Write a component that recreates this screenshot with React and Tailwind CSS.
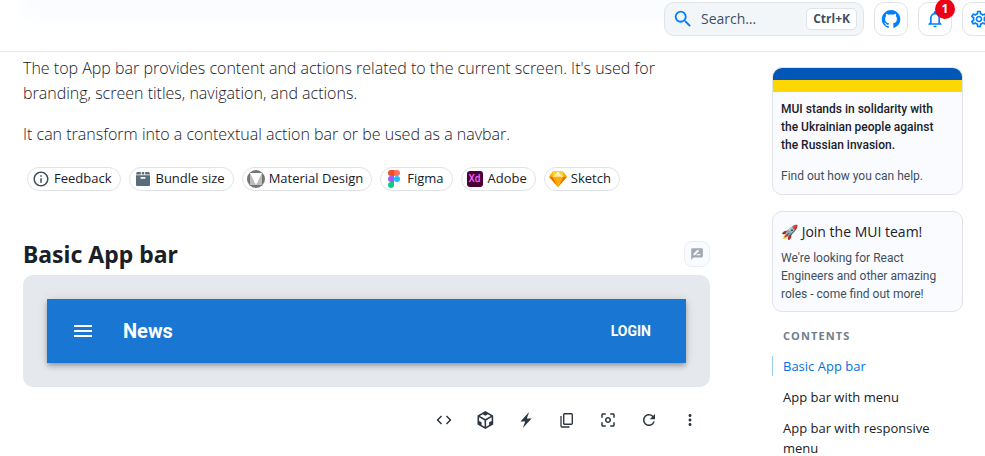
import {
  MdSearch, MdOutlineSettings, MdInfoOutline, MdCode, MdRefresh, MdMoreVert, MdMenu,
  MdRateReview, MdCenterFocusWeak, MdNotificationsNone,
} from "react-icons/md";

function GitHubIcon() {
  return (
    <svg viewBox="0 0 24 24" className="size-5" fill="currentColor" aria-hidden="true">
      <path d="M12 1.27a11 11 0 00-3.48 21.46c.55.09.73-.28.73-.55v-1.84c-3.03.64-3.67-1.46-3.67-1.46-.55-1.29-1.28-1.65-1.28-1.65-.92-.65.1-.65.1-.65 1.1 0 1.73 1.1 1.73 1.1.92 1.65 2.57 1.2 3.21.92a2 2 0 01.64-1.47c-2.47-.27-5.04-1.19-5.04-5.5 0-1.1.46-2.1 1.2-2.84a3.76 3.76 0 010-2.93s.91-.28 3.11 1.1c1.8-.49 3.7-.49 5.5 0 2.1-1.38 3.02-1.1 3.02-1.1a3.76 3.76 0 01.1 2.93c.83.74 1.2 1.74 1.2 2.94 0 4.21-2.57 5.13-5.04 5.4.45.37.82.92.82 2.02v3.03c0 .27.1.64.73.55A11 11 0 0012 1.27" />
    </svg>
  );
}

function BundleIcon() {
  return (
    <svg viewBox="0 0 16 16" className="size-4" aria-hidden="true">
      <path d="M2.2 1h3.6v2.6H1.2V2z M10.2 1h3.6l1 1v1.6h-4.6z M6.8 1h2.4v2.6H6.8z" fill="#5a6b7a" />
      <path d="M1 4.3h14V14a1 1 0 0 1-1 1H2a1 1 0 0 1-1-1z" fill="#5a6b7a" />
      <rect x="5.5" y="6" width="5" height="1.8" rx=".6" fill="#fff" />
    </svg>
  );
}

function MaterialIcon() {
  return (
    <svg viewBox="0 0 18 18" className="size-[18px]" aria-hidden="true">
      <circle cx="9" cy="9" r="9" fill="#757575" />
      <path d="M3 3h12v12H3z" fill="#bdbdbd" />
      <path d="M3 3h12L9 15z" fill="#fff" />
    </svg>
  );
}

function FigmaIcon() {
  return (
    <svg viewBox="0 0 12 18" className="h-[18px] w-3" aria-hidden="true">
      <path d="M3 0h3v6H3a3 3 0 0 1 0-6z" fill="#f24e1e" />
      <path d="M6 0h3a3 3 0 0 1 0 6H6z" fill="#ff7262" />
      <path d="M3 6h3v6H3a3 3 0 0 1 0-6z" fill="#a259ff" />
      <circle cx="9" cy="9" r="3" fill="#1abcfe" />
      <path d="M3 12h3v3a3 3 0 1 1-3-3z" fill="#0acf83" />
    </svg>
  );
}

function SketchIcon() {
  return (
    <svg viewBox="0 0 18 16" className="h-4 w-[18px]" aria-hidden="true">
      <path d="M4 .6 9 0l5 .6 4 5.2L9 16 0 5.8z" fill="#fdb300" />
      <path d="M3.6 5.8H0L9 16zM14.4 5.8H18L9 16z" fill="#ea6c00" />
      <path d="M3.6 5.8h10.8L9 16z" fill="#fdad00" />
      <path d="M9 0 3.6 5.8h10.8z" fill="#feeeb7" />
      <path d="M4 .6 0 5.8h3.6zM14 .6l4 5.2h-3.6z" fill="#fdad00" />
      <path d="M9 0 4 .6l-.4 5.2zM9 0l5 .6.4 5.2z" fill="#fdd231" />
    </svg>
  );
}

function SandboxIcon() {
  return (
    <svg viewBox="0 0 24 24" className="size-[18px]" fill="currentColor" aria-hidden="true">
      <path d="M2 6l10.455-6L22.91 6 23 17.95 12.455 24 2 18V6zm2.088 2.481v4.757l3.345 1.86v3.516l3.972 2.296v-8.272L4.088 8.481zm16.739 0l-7.317 4.157v8.272l3.972-2.296V15.1l3.345-1.861V8.48zM5.134 6.601l7.303 4.144 7.32-4.18-3.871-2.197-3.41 1.945-3.43-1.968L5.133 6.6z" />
    </svg>
  );
}

function BoltIcon() {
  return (
    <svg viewBox="0 0 24 24" className="size-4" fill="currentColor" aria-hidden="true">
      <path d="M10.797 14.182H3.635L16.728 0l-3.525 9.818h7.162L7.272 24l3.524-9.818Z" />
    </svg>
  );
}

function CopyIcon() {
  return (
    <svg viewBox="0 0 16 16" className="size-4" fill="none" stroke="currentColor" aria-hidden="true">
      <rect x="4.7" y="1.7" width="8.6" height="10.6" rx="1" strokeWidth="1.4" />
      <path d="M2 4v10.2a.8.8 0 0 0 .8.8h7.7" strokeWidth="1.3" />
    </svg>
  );
}

const chips = [
  { label: "Feedback", icon: <MdInfoOutline className="size-[18px] text-[#3e5060]" /> },
  { label: "Bundle size", icon: <BundleIcon /> },
  { label: "Material Design", icon: <MaterialIcon /> },
  { label: "Figma", icon: <FigmaIcon /> },
  {
    label: "Adobe",
    icon: (
      <span className="flex size-4 items-center justify-center rounded-[3px] bg-[#470137] font-['Roboto',sans-serif] text-[10px] leading-4 font-medium text-[#ff61f6]">
        Xd
      </span>
    ),
  },
  { label: "Sketch", icon: <SketchIcon /> },
];

const tools = [
  { label: "Show code", icon: <MdCode className="size-[18px]" /> },
  { label: "Edit in CodeSandbox", icon: <SandboxIcon /> },
  { label: "Edit in StackBlitz", icon: <BoltIcon /> },
  { label: "Copy the source", icon: <CopyIcon /> },
  { label: "Reset focus", icon: <MdCenterFocusWeak className="size-[18px]" /> },
  { label: "Reset demo", icon: <MdRefresh className="size-[18px]" /> },
  { label: "See more", icon: <MdMoreVert className="size-[18px]" /> },
];

const squareButton =
  "relative flex size-[34px] shrink-0 items-center justify-center rounded-[10px] border border-[#e0e3e7] bg-white text-[#007fff]";

function Header() {
  return (
    <header className="relative h-[52px] overflow-hidden border-b border-[#e7ebf0] pt-0.5">
      <div className="absolute -top-4 right-72 left-6 h-9 bg-[#fafcff] blur-sm" />
      <div className="relative -mr-[11px] flex justify-end gap-2.5">
        <button type="button" className="flex h-[34px] w-[200px] items-center rounded-[10px] border border-[#e0e3e7] bg-[#f3f6f9] pr-1.5 pl-[7px] text-sm text-[#3e5060]">
          <MdSearch className="mr-[7px] size-[22px] text-[#007fff]" />
          Search…
          <kbd className="ml-auto rounded-[5px] border border-[#e0e3e7] bg-white px-1.5 font-['Open_Sans',sans-serif] text-xs leading-5 font-bold">
            Ctrl+K
          </kbd>
        </button>
        <a href="#github" aria-label="GitHub" className={squareButton}><GitHubIcon /></a>
        <button type="button" aria-label="Notifications" className={squareButton}>
          <MdNotificationsNone className="size-5" />
          <span className="absolute -top-1 -right-1 flex size-5 items-center justify-center rounded-full bg-[#eb0014] text-xs font-bold text-white">
            1
          </span>
        </button>
        <button type="button" aria-label="Settings" className={squareButton}><MdOutlineSettings className="size-5" /></button>
      </div>
    </header>
  );
}

export default function App() {
  return (
    <div className="overflow-hidden bg-white font-['Open_Sans',sans-serif] text-[#1a2027]">
      <Header />
      <div className="flex items-start gap-[62px] pr-[22px] pl-[23px]">
        <main className="min-w-0 flex-1 pt-1">
          <p className="mb-4 text-base leading-[25px] font-light">
            The top App bar provides content and actions related to the current screen. It's used for branding, screen
            titles, navigation, and actions.
          </p>
          <p className="mb-5 text-base leading-[25px] font-light">
            It can transform into a contextual action bar or be used as a navbar.
          </p>
          <div className="flex gap-2 pl-1">
            {chips.map((c) => (
              <a key={c.label} href="#resource" className="flex h-6 items-center gap-1 rounded-full border border-[#e0e3e7] pr-2 pl-1 text-[13px] whitespace-nowrap">
                <span className="flex h-[18px] min-w-[18px] items-center justify-center">{c.icon}</span>
                {c.label}
              </a>
            ))}
          </div>
          <div className="mt-[49px] mb-[9px] flex items-center justify-between">
            <h2 className="font-['Noto_Sans',sans-serif] text-[23px] leading-7 font-bold">Basic App bar</h2>
            <button type="button" aria-label="Leave feedback" className="flex size-[26px] items-center justify-center rounded-lg border border-[#eaeef3] bg-[#f8fbff] text-[#a0aab4]">
              <MdRateReview className="size-3.5" />
            </button>
          </div>
          <div className="-mt-0.5 rounded-[10px] bg-[#e5e8ec] p-6">
            <div className="flex h-16 items-center bg-[#1976d2] px-6 font-['Roboto',sans-serif] text-white shadow-[0_2px_4px_-1px_rgba(0,0,0,0.2),0_4px_5px_0_rgba(0,0,0,0.14),0_1px_10px_0_rgba(0,0,0,0.12)]">
              <button type="button" aria-label="Menu" className="mr-4 -ml-3 flex size-12 items-center justify-center">
                <MdMenu className="size-6" />
              </button>
              <div className="flex-1 text-xl font-bold">News</div>
              <button type="button" className="px-[11px] text-sm font-bold">LOGIN</button>
            </div>
          </div>
          <div className="mt-4 mr-1 flex justify-end gap-2 text-[#2d3843]">
            {tools.map((t) => (
              <button key={t.label} type="button" aria-label={t.label} className="flex size-[33px] items-center justify-center">
                {t.icon}
              </button>
            ))}
          </div>
        </main>
        <aside className="w-[191px] shrink-0 pt-[15px]">
          <a href="#support" className="block overflow-hidden rounded-[10px] border border-[#e0e3e7] bg-[#fafbff] font-['Roboto',sans-serif] text-xs leading-[18px]">
            <span className="block h-3 bg-[#0057b8]" />
            <span className="block h-3 bg-[#ffd700]" />
            <span className="block pt-2 pr-6 pl-2 font-medium">
              MUI stands in solidarity with the Ukrainian people against the Russian invasion.
            </span>
            <span className="mt-[13px] block px-2 pb-[9px] text-[#3e5060]">Find out how you can help.</span>
          </a>
          <a href="#careers" className="mt-4 block rounded-[10px] border border-[#e0e3e7] bg-[#fafbff] p-2 font-['Roboto',sans-serif]">
            <span className="mb-[5px] block font-['Open_Sans',sans-serif] text-sm leading-6">🚀 Join the MUI team!</span>
            <span className="block text-xs leading-[18px] text-[#3e5060]">
              We're looking for React Engineers and other amazing roles - come find out more!
            </span>
          </a>
          <nav aria-labelledby="contents" className="mt-4">
            <h3 id="contents" className="mb-3 pl-[11px] text-[11px] leading-4 font-bold tracking-widest text-[#6f7e8c]">
              CONTENTS
            </h3>
            <ul className="flex flex-col gap-[11px] text-[13px] leading-5">
              <li><a href="#basic" className="block border-l border-[#99ccf3] pl-2.5 font-medium text-[#0072e5]">Basic App bar</a></li>
              <li><a href="#menu" className="block border-l border-transparent pl-2.5">App bar with menu</a></li>
              <li><a href="#responsive" className="block border-l border-transparent pr-6 pl-2.5">App bar with responsive menu</a></li>
            </ul>
          </nav>
        </aside>
      </div>
    </div>
  );
}
